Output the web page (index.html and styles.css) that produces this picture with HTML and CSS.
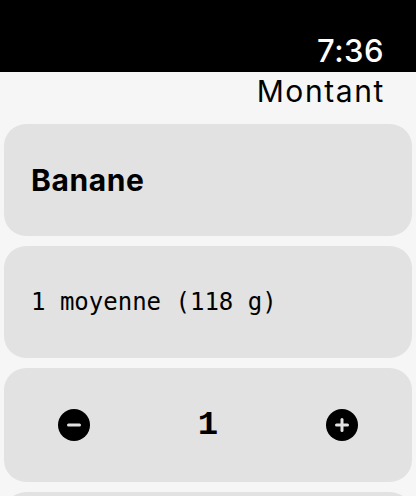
FILE: index.html
```html
<!DOCTYPE html>
<html lang="fr">
<head>
<meta charset="utf-8">
<link rel="stylesheet" href="styles.css">
</head>
<body>
<div class="status"><span class="time">7:36</span></div>
<div class="title">Montant</div>
<div class="list">
  <div class="card"><span class="name">Banane</span></div>
  <div class="card"><span class="portion">1 moyenne (118 g)</span></div>
  <div class="card stepper">
    <svg class="btn" viewBox="0 0 32 32" width="32" height="32"><circle cx="16" cy="16" r="16" fill="#000"/><rect x="9" y="14.5" width="14" height="3" rx="1.5" fill="#e2e2e2"/></svg>
    <span class="count">1</span>
    <svg class="btn" viewBox="0 0 32 32" width="32" height="32"><circle cx="16" cy="16" r="16" fill="#000"/><rect x="9" y="14.5" width="14" height="3" rx="1.5" fill="#e2e2e2"/><rect x="14.5" y="9" width="3" height="14" rx="1.5" fill="#e2e2e2"/></svg>
  </div>
  <div class="card"></div>
</div>
</body>
</html>
```
FILE: styles.css
```css
html, body {
  margin: 0;
  padding: 0;
  overflow: hidden;
}
body {
  background: #f6f6f6;
  font-family: Inter, "Noto Sans", sans-serif;
  width: 416px;
  height: 496px;
}
.status {
  background: #000;
  height: 72px;
  display: flex;
  justify-content: flex-end;
  align-items: flex-end;
  padding: 0 32px 3px 0;
  box-sizing: border-box;
}
.time {
  color: #fff;
  font-size: 31px;
  line-height: 36px;
  font-weight: 500;
  letter-spacing: 0.5px;
}
.title {
  text-align: right;
  padding-right: 31px;
  font-size: 30px;
  line-height: 36px;
  margin-top: 1px;
  margin-bottom: 15px;
  color: #000;
  font-weight: 400;
  letter-spacing: 1.6px;
}
.list {
  display: flex;
  flex-direction: column;
  gap: 10px;
  padding: 0 4px;
}
.card {
  background: #e2e2e2;
  border-radius: 22px;
  height: 112px;
  flex-shrink: 0;
  display: flex;
  align-items: center;
  padding: 0 27px;
  box-sizing: border-box;
}
.name {
  font-size: 30px;
  font-weight: 700;
  color: #000;
  letter-spacing: 0.6px;
}
.portion {
  font-family: "DejaVu Sans Mono", "Liberation Mono", monospace;
  font-size: 24px;
  color: #000;
}
.stepper {
  justify-content: space-between;
  padding: 0 54px;
  height: 114px;
}
.count {
  font-family: "Liberation Mono", monospace;
  font-weight: 700;
  font-size: 34px;
  color: #000;
}
.btn {
  display: block;
}
```
